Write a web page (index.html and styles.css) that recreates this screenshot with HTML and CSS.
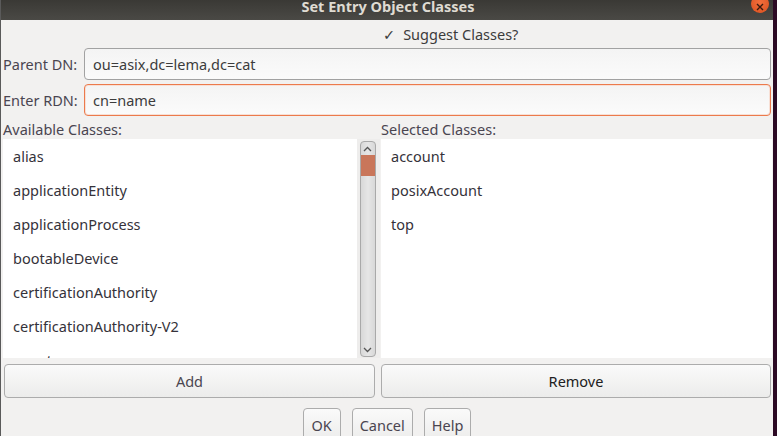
FILE: index.html
```html
<!DOCTYPE html>
<html>
<head>
<meta charset="utf-8">
<link rel="stylesheet" href="styles.css">
</head>
<body>
<div class="screen">
  <div class="window">
    <div class="titlebar">
      <span class="title">Set Entry Object Classes</span>
      <span class="close">
        <svg width="8" height="8" viewBox="0 0 8 8"><path d="M1 1L7 7M7 1L1 7" stroke="#3a1a0e" stroke-width="1.4" fill="none"/></svg>
      </span>
    </div>
    <div class="content">
      <div class="suggest"><span class="check">✓</span><span>Suggest Classes?</span></div>
      <div class="form">
        <label class="lbl">Parent DN:</label>
        <div class="input">ou=asix,dc=lema,dc=cat</div>
        <label class="lbl">Enter RDN:</label>
        <div class="input focus">cn=name</div>
      </div>
      <div class="panes">
        <div class="pane-left">
          <div class="pane-title">Available Classes:</div>
          <div class="listwrap">
            <ul class="list">
              <li>alias</li>
              <li>applicationEntity</li>
              <li>applicationProcess</li>
              <li>bootableDevice</li>
              <li>certificationAuthority</li>
              <li>certificationAuthority-V2</li>
              <li>country</li>
            </ul>
            <div class="scrollcol">
              <div class="trough">
                <svg class="arrow" width="9" height="6" viewBox="0 0 9 6"><path d="M1 5L4.5 1.5L8 5" stroke="#555" stroke-width="1.3" fill="none"/></svg>
                <div class="thumb"></div>
                <div class="spacer"></div>
                <svg class="arrow" width="9" height="6" viewBox="0 0 9 6"><path d="M1 1L4.5 4.5L8 1" stroke="#555" stroke-width="1.3" fill="none"/></svg>
              </div>
            </div>
          </div>
          <button class="btn wide">Add</button>
        </div>
        <div class="pane-right">
          <div class="pane-title">Selected Classes:</div>
          <ul class="list sel">
            <li>account</li>
            <li>posixAccount</li>
            <li>top</li>
          </ul>
          <button class="btn wide dark">Remove</button>
        </div>
      </div>
      <div class="actions">
        <button class="btn small">OK</button>
        <button class="btn small">Cancel</button>
        <button class="btn small">Help</button>
      </div>
    </div>
  </div>
  <div class="edge"></div>
</div>
</body>
</html>
```

FILE: styles.css
```css
html, body {
  margin: 0;
  padding: 0;
  width: 777px;
  height: 436px;
  overflow: hidden;
  background: #2b0b22;
  font-family: "Noto Sans", "DejaVu Sans", sans-serif;
  font-size: 14.5px;
  color: #3c3c3c;
}
.screen {
  display: flex;
  height: 436px;
}
.window {
  width: 773px;
  height: 436px;
  background: #f2f1f0;
  display: flex;
  flex-direction: column;
  border-left: 1px solid #5a5a5a;
  box-sizing: border-box;
}
.edge {
  flex: 1;
  background: #2c0a24;
}
.titlebar {
  position: relative;
  height: 20px;
  background: linear-gradient(#3a3935, #4a4945);
  display: flex;
  justify-content: center;
  flex-shrink: 0;
}
.title {
  font-weight: bold;
  color: #dfdbd2;
  font-size: 14.5px;
  line-height: 14px;
  margin-top: -1px;
  padding-left: 2px;
}
.close {
  position: absolute;
  left: 750px;
  top: -5px;
  width: 18px;
  height: 18px;
  border-radius: 50%;
  background: radial-gradient(circle at 50% 40%, #f26e3c, #d9501f);
  display: flex;
  align-items: center;
  justify-content: center;
  padding-top: 6px;
  box-sizing: border-box;
}
.content {
  flex: 1;
  display: flex;
  flex-direction: column;
  padding: 0 1px 0 1px;
}
.suggest {
  height: 27px;
  display: flex;
  align-items: center;
  padding-left: 381px;
  gap: 8px;
  flex-shrink: 0;
}
.check {
  color: #3c3c3c;
}
.form {
  display: grid;
  grid-template-columns: 82px 1fr;
  row-gap: 4px;
  margin-top: 1px;
  padding-right: 1px;
}
.lbl {
  display: flex;
  align-items: center;
  color: #4a4550;
  padding-left: 1px;
}
.input {
  height: 32px;
  box-sizing: border-box;
  border: 1px solid #a2a2a2;
  border-radius: 4px;
  background: linear-gradient(#f4f4f4, #fbfbfb);
  padding-left: 8px;
  display: flex;
  align-items: center;
  color: #3c3c3c;
}
.input.focus {
  border-color: #ec7a4c;
  box-shadow: inset 0 0 0 1px #f7e0d6;
}
.panes {
  display: grid;
  grid-template-columns: 378px 1fr;
  column-gap: 1px;
  margin-top: 3px;
}
.pane-left, .pane-right {
  display: flex;
  flex-direction: column;
}
.pane-title {
  height: 20px;
  display: flex;
  align-items: center;
  color: #4a4550;
  padding-left: 1px;
}
.pane-right .pane-title {
  padding-left: 0;
}
.listwrap {
  display: flex;
  height: 219px;
}
.list {
  list-style: none;
  margin: 0;
  padding: 0;
  background: #ffffff;
  overflow: hidden;
  height: 219px;
  box-sizing: border-box;
}
.listwrap .list {
  flex: 1;
  margin-left: 1px;
}
.list li {
  height: 34px;
  line-height: 35px;
  padding-left: 10px;
  color: #35323a;
}
.scrollcol {
  width: 23px;
  background: #eeedec;
  display: flex;
  justify-content: center;
  padding: 2px 0 1px 0;
  box-sizing: border-box;
}
.trough {
  width: 16px;
  box-sizing: border-box;
  border: 1px solid #a9a9a9;
  border-radius: 4px;
  background: linear-gradient(90deg, #d8d8d8, #e6e6e6 50%, #d8d8d8);
  display: flex;
  flex-direction: column;
  align-items: center;
  margin-left: -2px;
}
.arrow {
  margin: 4px 0 3px;
  flex-shrink: 0;
}
.thumb {
  width: 14px;
  height: 21px;
  background: #c9765a;
  flex-shrink: 0;
}
.spacer {
  flex: 1;
}
.btn {
  font-family: "Noto Sans", "DejaVu Sans", sans-serif;
  font-size: 14.5px;
  color: #4a4550;
  border: 1px solid #acacac;
  border-radius: 4px;
  background: linear-gradient(#fafafa, #ececeb);
  height: 34px;
  padding: 0;
}
.btn.wide {
  margin-top: 6px;
}
.pane-left .btn.wide {
  margin-left: 2px;
  width: 371px;
}
.pane-right .btn.wide {
  width: 390px;
}
.btn.dark {
  color: #202020;
}
.actions {
  display: flex;
  justify-content: center;
  gap: 11px;
  margin-top: 10px;
}
.btn.small {
  height: 34px;
  padding: 0 7px;
  min-width: 38px;
}
```
